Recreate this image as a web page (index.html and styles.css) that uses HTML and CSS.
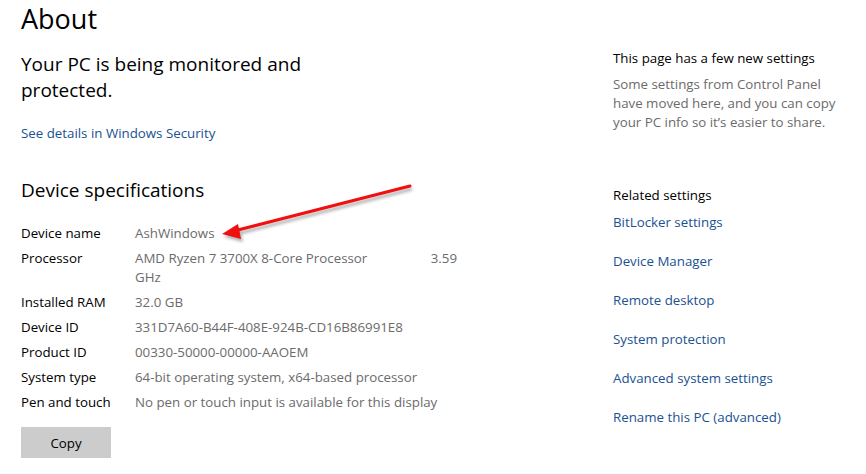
FILE: index.html
```html
<!DOCTYPE html>
<html>
<head>
<meta charset="utf-8">
<link rel="stylesheet" href="styles.css">
</head>
<body>
<div class="page">
  <div class="main">
    <h1 class="title">About</h1>
    <p class="status">Your PC is being monitored and<br>protected.</p>
    <a class="link security">See details in Windows Security</a>
    <h2 class="section">Device specifications</h2>
    <div class="specs">
      <div class="label">Device name</div><div class="value">AshWindows</div>
      <div class="label">Processor</div>
      <div class="value proc"><div class="procline"><span>AMD Ryzen 7 3700X 8-Core Processor</span><span>3.59</span></div><div>GHz</div></div>
      <div class="label">Installed RAM</div><div class="value">32.0 GB</div>
      <div class="label">Device ID</div><div class="value">331D7A60-B44F-408E-924B-CD16B86991E8</div>
      <div class="label">Product ID</div><div class="value">00330-50000-00000-AAOEM</div>
      <div class="label">System type</div><div class="value">64-bit operating system, x64-based processor</div>
      <div class="label">Pen and touch</div><div class="value">No pen or touch input is available for this display</div>
    </div>
    <button class="copy">Copy</button>
  </div>
  <div class="side">
    <div class="side-title">This page has a few new settings</div>
    <p class="side-text">Some settings from Control Panel have moved here, and you can copy your PC info so it’s easier to share.</p>
    <div class="related">Related settings</div>
    <ul class="links">
      <li><a class="link">BitLocker settings</a></li>
      <li><a class="link">Device Manager</a></li>
      <li><a class="link">Remote desktop</a></li>
      <li><a class="link">System protection</a></li>
      <li><a class="link">Advanced system settings</a></li>
      <li><a class="link">Rename this PC (advanced)</a></li>
    </ul>
  </div>
</div>
<svg class="arrow" width="866" height="474" viewBox="0 0 866 474">
  <defs>
    <filter id="sh" x="-20%" y="-50%" width="140%" height="200%">
      <feGaussianBlur stdDeviation="1.5"/>
    </filter>
  </defs>
  <g transform="translate(2,3)" opacity="0.45" filter="url(#sh)">
    <line x1="410" y1="186" x2="234" y2="231" stroke="#555" stroke-width="3"/>
    <polygon points="222,234 238,224 241,239" fill="#555"/>
  </g>
  <line x1="410" y1="186" x2="234" y2="231" stroke="#f01010" stroke-width="3" stroke-linecap="round"/>
  <polygon points="222,234 238,224 241,239" fill="#f01010"/>
</svg>
</body>
</html>
```
FILE: styles.css
```css
html, body {
  margin: 0;
  padding: 0;
  background: #ffffff;
}
body {
  font-family: "Open Sans", "Noto Sans", sans-serif;
  color: #000;
  width: 866px;
  height: 474px;
  overflow: hidden;
  position: relative;
}
.page {
  display: flex;
  padding-left: 21px;
}
.main {
  width: 592px;
}
.title {
  margin: 0;
  font-size: 27px;
  font-weight: 400;
  line-height: 38px;
}
.status {
  margin: 13px 0 0;
  font-size: 19px;
  line-height: 26px;
}
.link {
  color: #1a5291;
  font-size: 13.3px;
  text-decoration: none;
}
.security {
  display: block;
  margin-top: 20px;
  line-height: 20px;
}
.section {
  margin: 34px 0 0;
  font-size: 19px;
  font-weight: 400;
  line-height: 26px;
}
.specs {
  display: grid;
  grid-template-columns: 114px auto;
  row-gap: 6px;
  margin-top: 21px;
  font-size: 13.3px;
  line-height: 19px;
}
.value {
  color: #6b6b6b;
}
.proc {
  width: 322px;
}
.procline {
  display: flex;
  justify-content: space-between;
}
.copy {
  margin-top: 15px;
  width: 90px;
  height: 31px;
  border: none;
  background: #cccccc;
  font-family: inherit;
  font-size: 13.3px;
  color: #000;
  padding: 0;
}
.side {
  padding-top: 48px;
  width: 230px;
  font-size: 13.3px;
}
.side-title {
  line-height: 20px;
}
.side-text {
  margin: 7px 0 0;
  line-height: 19px;
  color: #6b6b6b;
}
.related {
  margin-top: 53px;
  line-height: 20px;
}
.links {
  list-style: none;
  margin: 7px 0 0;
  padding: 0;
  display: flex;
  flex-direction: column;
  gap: 19px;
}
.links li {
  line-height: 20px;
  font-size: 13.3px;
}
.arrow {
  position: absolute;
  left: 0;
  top: 0;
  pointer-events: none;
}
```
